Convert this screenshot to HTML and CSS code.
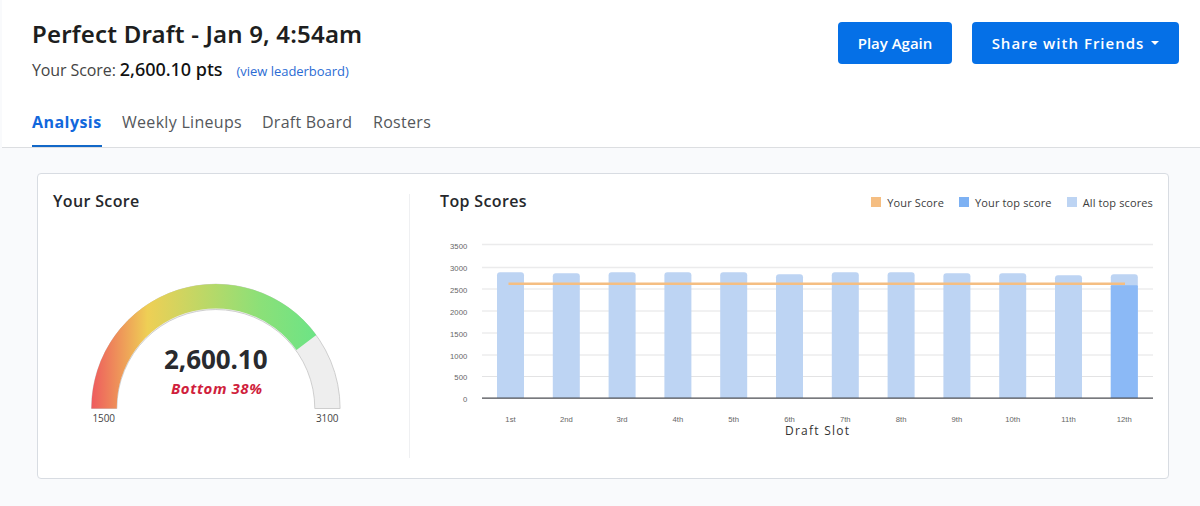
FILE: index.html
```html
<!DOCTYPE html>
<html lang="en">
<head>
<meta charset="utf-8">
<title>Perfect Draft</title>
<link rel="stylesheet" href="styles.css">
</head>
<body>
<div class="page">
  <header class="header">
    <div class="top">
      <div class="heading">
        <h1 class="title">Perfect Draft - Jan 9, 4:54am</h1>
        <div class="score"><span class="score-label">Your Score:</span><span class="score-value">2,600.10 pts</span><a class="leaderboard">(view leaderboard)</a></div>
      </div>
      <div class="actions">
        <button class="btn btn-play">Play Again</button>
        <button class="btn btn-share">Share with Friends<span class="caret"></span></button>
      </div>
    </div>
    <nav class="tabs">
      <a class="tab active">Analysis</a>
      <a class="tab weekly">Weekly Lineups</a>
      <a class="tab board">Draft Board</a>
      <a class="tab rosters">Rosters</a>
    </nav>
  </header>
  <main class="card">
    <section class="gauge-panel">
      <h2 class="panel-title">Your Score</h2>
      <svg class="gauge" width="260" height="155" viewBox="86 275 260 155">
        <defs>
          <linearGradient id="meter" gradientUnits="userSpaceOnUse" x1="91" y1="0" x2="317" y2="0">
            <stop offset="0" stop-color="#ee5a5e"/>
            <stop offset=".25" stop-color="#eecf55"/>
            <stop offset=".75" stop-color="#8be078"/>
            <stop offset="1" stop-color="#6ce486"/>
          </linearGradient>
        </defs>
        <path class="gauge-track" d="M91.5 408.5A124.3 124.3 0 0 1 340.1 408.5H314.8A99 99 0 0 0 116.8 408.5Z"/>
        <path fill="url(#meter)" d="M91.5 408.5A124.3 124.3 0 0 1 316.3 335.1L296.5 350.1A99 99 0 0 0 116.8 408.5Z"/>
        <text class="gauge-value" x="164" y="368.5" textLength="103.5">2,600.10</text>
        <text class="gauge-rank" x="171" y="394" textLength="91">Bottom 38%</text>
        <text class="gauge-end" x="92.5" y="422" textLength="22.5">1500</text>
        <text class="gauge-end" x="316" y="422" textLength="22.5">3100</text>
      </svg>
    </section>
    <section class="chart-panel">
      <div class="chart-head">
        <h2 class="panel-title">Top Scores</h2>
        <div class="legend">
          <span class="key"><i class="swatch orange"></i><span class="key-text">Your Score</span></span>
          <span class="key"><i class="swatch blue"></i><span class="key-text">Your top score</span></span>
          <span class="key"><i class="swatch pale"></i><span class="key-text">All top scores</span></span>
        </div>
      </div>
      <svg class="chart" id="chart" width="713" height="210" viewBox="440 230 713 210"></svg>
    </section>
  </main>
</div>
<script src="chart.js"></script>
</body>
</html>
```
FILE: styles.css
```css
* { box-sizing: border-box; }
body { margin: 0; background: #f9fafc; font-family: "Open Sans", "Noto Sans", sans-serif; color: #212529; }
.page { height: 506px; padding-left: 2px; overflow: hidden; }
.header { height: 148px; background: #fff; border-bottom: 1px solid #dcdee1; padding: 19px 21px 0 30px; display: flex; flex-direction: column; justify-content: space-between; }
.top { display: flex; justify-content: space-between; }
.title { margin: 0; font-family: "Noto Sans", sans-serif; font-size: 24px; line-height: 30px; font-weight: 600; letter-spacing: .18px; color: #1d1e20; white-space: nowrap; }
.score { display: flex; align-items: baseline; line-height: 26px; margin-top: 7px; white-space: nowrap; }
.score-label { font-size: 16px; letter-spacing: -.1px; color: #444; margin-right: 4px; }
.score-value { font-size: 18px; font-weight: 500; letter-spacing: -.03px; color: #111; margin-right: 14px; font-family: "Noto Sans", sans-serif; }
.leaderboard { font-size: 13px; color: #2b6cd4; letter-spacing: -.03px; }
.actions { display: flex; gap: 20px; padding-top: 3px; }
.btn { height: 42px; border: 0; border-radius: 4px; padding: 0; background: #0570e7; color: #fff; font: 600 15px "Open Sans", sans-serif; display: flex; align-items: center; justify-content: center; white-space: nowrap; }
.btn-play { width: 114px; letter-spacing: 0; }
.btn-share { width: 207px; letter-spacing: 1px; }
.caret { margin-left: 7px; border: 4px solid transparent; border-top-color: #fff; border-bottom: 0; }
.tabs { display: flex; gap: 20px; height: 38px; }
.tab { font-size: 16px; line-height: 27px; color: #54575b; white-space: nowrap; }
.tab.active { color: #1268dc; font-weight: 700; letter-spacing: .45px; border-bottom: 2px solid #1268c8; width: 70px; }
.weekly { width: 120px; letter-spacing: .3px; }
.board { width: 91px; letter-spacing: .25px; }
.rosters { letter-spacing: .3px; }
.card { margin: 25px 31px 0 35px; height: 306px; background: #fff; border: 1px solid #d8dce2; border-radius: 4px; display: flex; padding: 20px 15px; }
.gauge-panel { width: 357px; height: 264px; border-right: 1px solid #eff0f2; }
.panel-title { margin: 0; font-size: 16px; line-height: 14px; height: 16px; font-weight: 600; letter-spacing: .35px; color: #26282c; white-space: nowrap; }
.gauge { display: block; margin: 65px 0 0 33px; }
.gauge-track { fill: #eee; stroke: #c4c4c4; stroke-width: .8; }
.gauge-value { font: 700 26px "Open Sans", sans-serif; fill: #292a2e; }
.gauge-rank { font: italic 700 15px "Open Sans", sans-serif; fill: #d01f3d; }
.gauge-end { font: 10px "Open Sans", sans-serif; fill: #444; }
.chart-panel { flex: 1; padding-left: 30px; }
.chart-head { display: flex; justify-content: space-between; height: 36px; }
.legend { display: flex; gap: 15px; height: 16px; align-items: center; font-size: 11px; font-weight: 500; color: #3c3c3c; white-space: nowrap; }
.key { display: flex; gap: 6px; align-items: center; }
.key-text { padding-top: 1px; letter-spacing: .13px; }
.swatch { width: 10px; height: 10px; }
.orange { background: #f5be82; }
.blue { background: #7db1f3; }
.pale { background: #bdd4f3; }
.chart { display: block; }
.axis-label { font: 7.7px "Liberation Sans", sans-serif; fill: #666; }
.grid { stroke: #e3e3e4; stroke-width: 1; }
.grid-top { stroke: #ebebec; stroke-width: 1.6; }
.axis { stroke: #4b4d52; stroke-width: 1.3; }
.bar { fill: #bdd4f3; }
.bar-own { fill: #8bb9f6; }
.score-line { stroke: #f5be82; stroke-width: 2.5; }
.axis-title { font: 500 12px "Open Sans", sans-serif; fill: #333; }
```
FILE: chart.js
```js
const svg = document.getElementById('chart');
function add(tag, attrs, text) {
  const node = document.createElementNS('http://www.w3.org/2000/svg', tag);
  for (const key in attrs) node.setAttribute(key, attrs[key]);
  if (text !== undefined) node.textContent = text;
  svg.appendChild(node);
}
const rows = [244.5, 267.5, 289, 311, 333, 355, 376.5];
rows.forEach((y, i) => add('line', { x1: 482, x2: 1153, y1: y, y2: y, class: i < 2 ? 'grid-top' : 'grid' }));
for (let i = 0; i < 8; i++) {
  add('text', { x: 467.2, y: 249.3 + i * 21.86, 'text-anchor': 'end', class: 'axis-label' }, 3500 - i * 500);
}
const slots = ['1st', '2nd', '3rd', '4th', '5th', '6th', '7th', '8th', '9th', '10th', '11th', '12th'];
const tops = [272.3, 273.3, 272.3, 272.3, 272.3, 274.3, 272.3, 272.3, 273.3, 273.3, 275.3, 274.3];
slots.forEach((name, i) => {
  const c = 510.5 + i * 55.8, t = tops[i];
  add('path', { class: 'bar', d: `M${c - 13.5} 398V${t + 3}q0-3 3-3h21q3 0 3 3V398z` });
  if (i === 11) add('path', { class: 'bar-own', d: `M${c - 13.5} 398V286.3q0-1 1-1h25q1 0 1 1V398z` });
  add('text', { x: c, y: 421.5, 'text-anchor': 'middle', class: 'axis-label' }, name);
});
add('line', { x1: 508.5, x2: 1125, y1: 283.7, y2: 283.7, class: 'score-line' });
add('line', { x1: 482, x2: 1153, y1: 398.2, y2: 398.2, class: 'axis' });
add('text', { x: 785, y: 435, textLength: 64, class: 'axis-title' }, 'Draft Slot');
```
